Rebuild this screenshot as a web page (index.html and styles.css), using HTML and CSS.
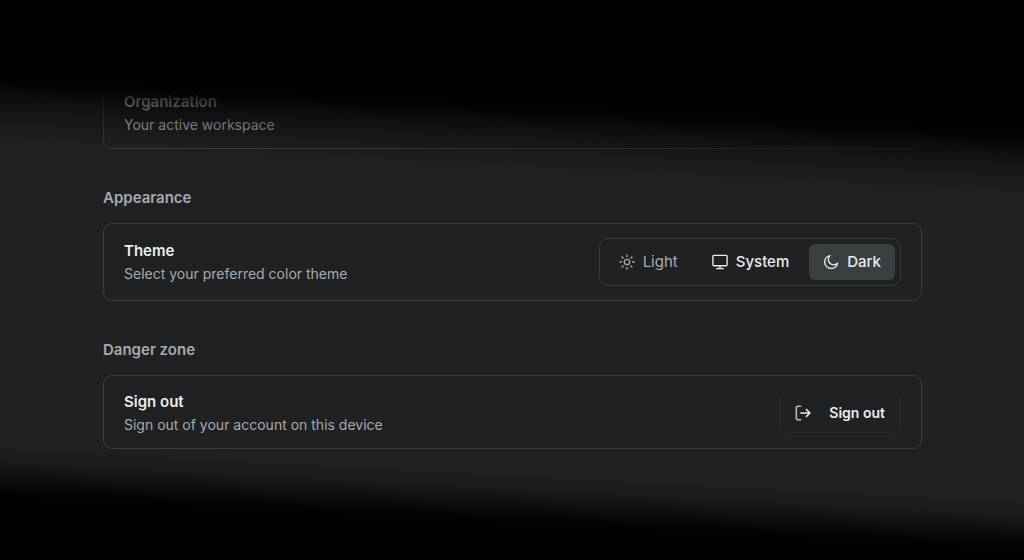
FILE: index.html
```html
<!DOCTYPE html>
<html lang="en">
<head>
<meta charset="utf-8">
<meta name="viewport" content="width=device-width, initial-scale=1">
<title>Settings</title>
<link rel="stylesheet" href="styles.css">
</head>
<body>
<main class="settings">
  <section class="section">
    <div class="card">
      <div class="card-text">
        <h3 class="card-title card-title-muted">Organization</h3>
        <p class="card-desc">Your active workspace</p>
      </div>
    </div>
  </section>

  <section class="section">
    <h2 class="section-title">Appearance</h2>
    <div class="card card-roomy">
      <div class="card-text">
        <h3 class="card-title" id="theme-title">Theme</h3>
        <p class="card-desc">Select your preferred color theme</p>
      </div>
      <div class="segmented" role="radiogroup" aria-labelledby="theme-title">
        <label class="segment segment-muted">
          <input class="segment-input" type="radio" name="theme" value="light">
          <svg class="icon" viewBox="0 0 18 18" aria-hidden="true"><circle cx="9" cy="9" r="3"/><path d="M9 1v1.8M9 15.2V17M1 9h1.8M15.2 9H17M3.4 3.4l1.2 1.2M13.4 13.4l1.2 1.2M3.4 14.6l1.2-1.2M13.4 4.6l1.2-1.2"/></svg>
          <span>Light</span>
        </label>
        <label class="segment">
          <input class="segment-input" type="radio" name="theme" value="system">
          <svg class="icon" viewBox="0 0 18 18" aria-hidden="true"><rect x="1" y="1.6" width="16" height="11.6" rx="1.2"/><path d="M9 13.2v3M5.2 16.4h7.6"/></svg>
          <span>System</span>
        </label>
        <label class="segment">
          <input class="segment-input" type="radio" name="theme" value="dark" checked>
          <svg class="icon" viewBox="0 0 18 18" aria-hidden="true"><path d="M7.8 1.8A6 6 0 0 0 16.4 10.4A7.3 7.3 0 1 1 7.8 1.8Z"/></svg>
          <span>Dark</span>
        </label>
      </div>
    </div>
  </section>

  <section class="section">
    <h2 class="section-title">Danger zone</h2>
    <div class="card">
      <div class="card-text">
        <h3 class="card-title">Sign out</h3>
        <p class="card-desc">Sign out of your account on this device</p>
      </div>
      <button class="button" type="button">
        <svg class="icon icon-strong" viewBox="0 0 18 18" aria-hidden="true"><path class="icon-dim" d="M6.4 1.4H2.9a1.4 1.4 0 0 0-1.4 1.4v12.4a1.4 1.4 0 0 0 1.4 1.4h3.5"/><path d="M6.6 9h10.2M12.8 5l4 4-4 4"/></svg>
        <span>Sign out</span>
      </button>
    </div>
  </section>
</main>
<div class="fade" aria-hidden="true"></div>
</body>
</html>
```
FILE: styles.css
```css
* {
  box-sizing: border-box;
}

body {
  margin: 0;
  min-height: 100vh;
  background: #202123;
  color: #ececed;
  font-family: Inter, "Liberation Sans", sans-serif;
  font-size: 15px;
  line-height: 22px;
}

.settings {
  display: flex;
  flex-direction: column;
  gap: 37px;
  padding: 75px 102px 40px 103px;
}

.section {
  display: flex;
  flex-direction: column;
  gap: 13px;
}

.section-title {
  margin: 0;
  color: #a6abaf;
  font-size: 15px;
  font-weight: 600;
  line-height: 24px;
}

.card {
  display: flex;
  align-items: center;
  justify-content: space-between;
  gap: 20px;
  padding: 14px 20px 12px;
  border: 1px solid #393b3d;
  border-radius: 9px;
}

.card-roomy {
  padding-block: 14px;
}

.card-text {
  display: grid;
}

.card-title {
  margin: 0;
  font-size: 15px;
  font-weight: 600;
  line-height: 24px;
}

.card-title-muted {
  color: #c4c6c8;
}

.card-desc {
  margin: 0;
  color: #a8aaad;
  font-size: 14px;
}

.segmented {
  display: flex;
  gap: 6px;
  padding: 5px;
  border: 1px solid #35393b;
  border-radius: 9px;
}

.segment {
  display: flex;
  align-items: center;
  gap: 8px;
  height: 36px;
  padding: 0 14px;
  border-radius: 6px;
  font-weight: 500;
  cursor: pointer;
}

.segment:has(:checked) {
  background: #3a3f42;
}

.segment-muted {
  color: #a8abae;
  font-weight: 400;
}

.segment-input {
  position: absolute;
  margin: 0;
  opacity: 0;
}

.segment:has(:focus-visible) {
  outline: 2px solid #7b8388;
}

.icon {
  width: 16px;
  height: 16px;
  flex: none;
  fill: none;
  stroke: currentColor;
  stroke-width: 1.5;
  stroke-linecap: round;
  stroke-linejoin: round;
}

.icon-strong {
  stroke-width: 1.8;
}

.icon-dim {
  opacity: 0.75;
}

.button {
  display: flex;
  align-items: center;
  gap: 18px;
  height: 39px;
  padding: 0 15px;
  border: 1px solid #27292b;
  border-radius: 7px;
  background: transparent;
  color: inherit;
  font: inherit;
  font-size: 14px;
  font-weight: 600;
  cursor: pointer;
}

.fade {
  position: fixed;
  inset: 0;
  pointer-events: none;
  background: linear-gradient(
    183deg,
    #000 124px,
    rgb(0 0 0 / 0.9) 136px,
    rgb(0 0 0 / 0.6) 150px,
    rgb(0 0 0 / 0.3) 168px,
    rgb(0 0 0 / 0.08) 188px,
    transparent 204px,
    transparent 496px,
    rgb(0 0 0 / 0.15) 512px,
    rgb(0 0 0 / 0.55) 530px,
    rgb(0 0 0 / 0.92) 546px,
    #000 558px
  );
}
```
